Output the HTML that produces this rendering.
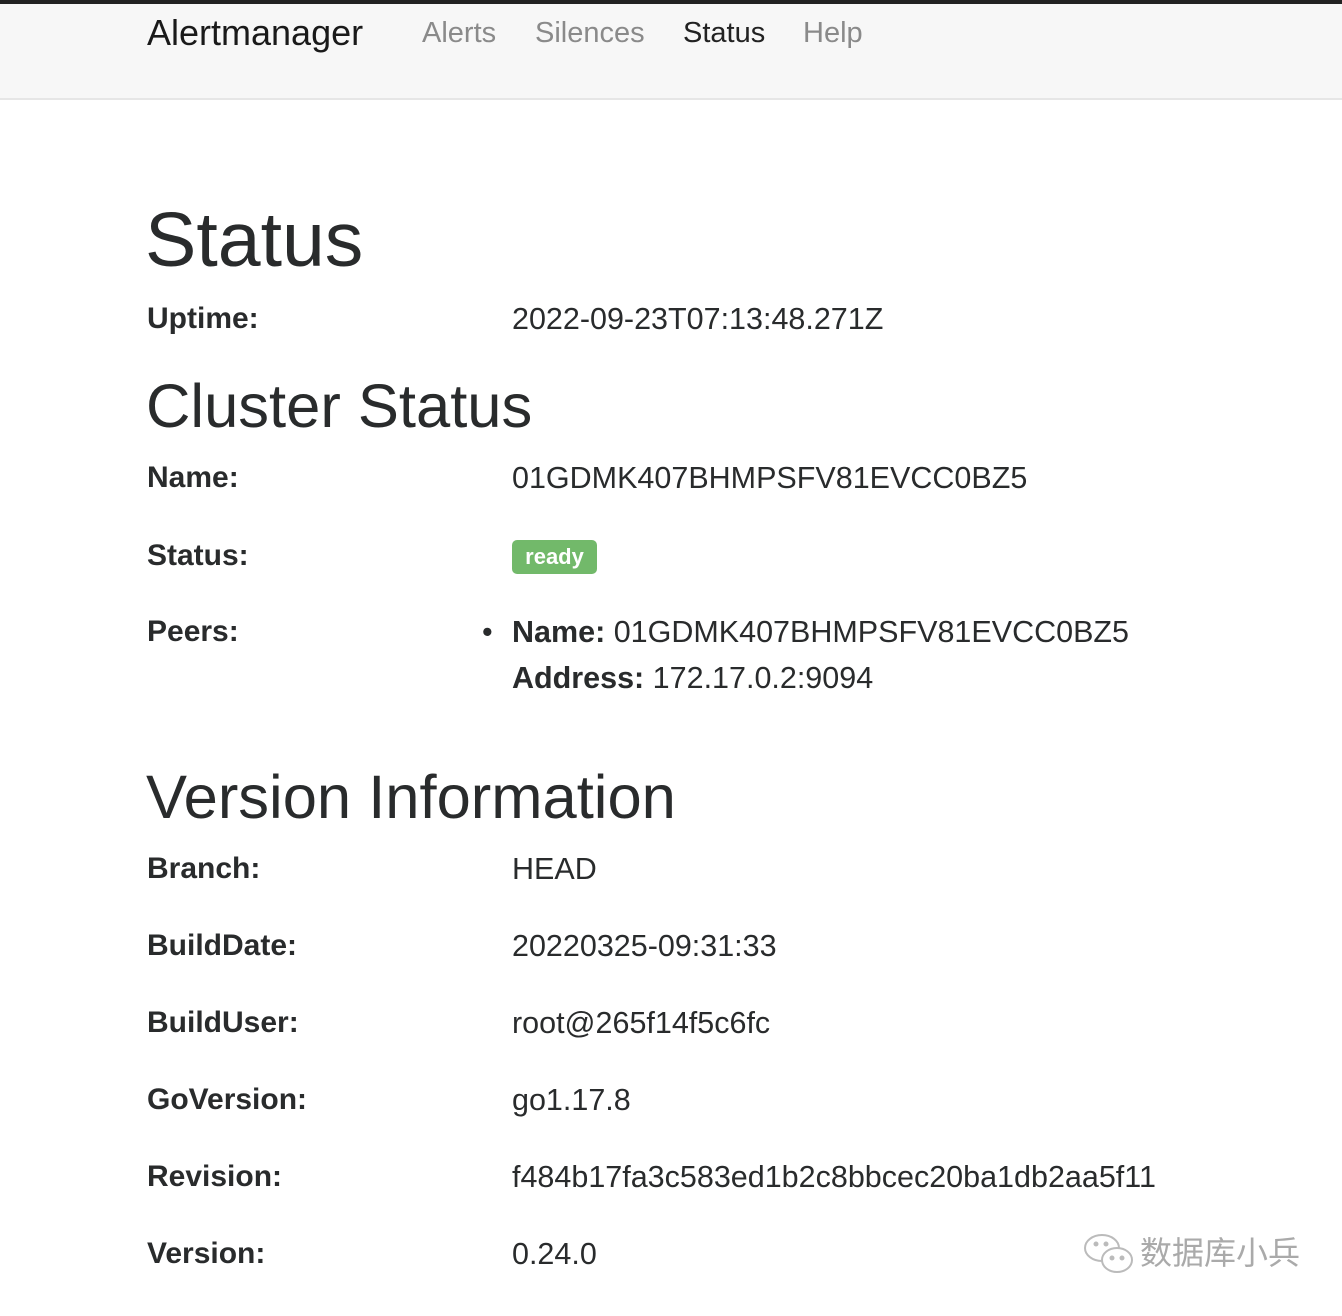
<!DOCTYPE html>
<html><head><meta charset="utf-8"><style>
*{margin:0;padding:0;box-sizing:border-box}
body{width:1342px;height:1316px;background:#fff;position:relative;overflow:hidden;font-family:"Liberation Sans",sans-serif;color:#292b2c}
.top{position:absolute;left:0;top:0;width:1342px;height:4px;background:#222}
.nav{position:absolute;left:0;top:4px;width:1342px;height:96px;background:#f7f7f7;border-bottom:2px solid #e6e6e6}
.a{position:absolute;white-space:nowrap}
.brand{font-size:36px;left:147px;top:7px;line-height:44px;color:#1a1a1a}
.nl{font-size:29px;top:11px;line-height:36px;color:#8a8a8a}
.h1{font-size:77px;left:145px;top:196px;line-height:88px}
.h2{font-size:61.5px;line-height:70px;left:146px}
.l{font-weight:bold;font-size:30px;line-height:36px;left:147px}
.v{font-size:30.5px;line-height:36px;left:512px}
.badge{position:absolute;left:512px;top:540px;width:85px;height:34px;background:#72b96a;border-radius:5px;color:#fff;font-weight:bold;font-size:22px;line-height:34px;text-align:center}
.wm{position:absolute;left:1140px;top:1233px;font-family:"Liberation Sans","Noto Sans CJK SC",sans-serif;font-size:32px;color:#aaa;line-height:40px}
</style></head><body>
<div class="top"></div>
<div class="nav">
<div class="a brand">Alertmanager</div>
<div class="a nl" style="left:422px">Alerts</div>
<div class="a nl" style="left:535px">Silences</div>
<div class="a nl" style="left:683px;color:#222">Status</div>
<div class="a nl" style="left:803px">Help</div>
</div>
<div class="a h1">Status</div>
<div class="a l" style="top:301px">Uptime:</div>
<div class="a v" style="top:301px">2022-09-23T07:13:48.271Z</div>
<div class="a h2" style="top:372px">Cluster Status</div>
<div class="a l" style="top:460px">Name:</div>
<div class="a v" style="top:460px">01GDMK407BHMPSFV81EVCC0BZ5</div>
<div class="a l" style="top:538px">Status:</div>
<div class="badge">ready</div>
<div class="a l" style="top:614px">Peers:</div>
<div class="a v" style="top:614px;left:482px">•</div>
<div class="a v" style="top:614px"><b>Name:</b> 01GDMK407BHMPSFV81EVCC0BZ5</div>
<div class="a v" style="top:660px"><b>Address:</b> 172.17.0.2:9094</div>
<div class="a h2" style="top:763px">Version Information</div>
<div class="a l" style="top:851px">Branch:</div>
<div class="a v" style="top:851px">HEAD</div>
<div class="a l" style="top:928px">BuildDate:</div>
<div class="a v" style="top:928px">20220325-09:31:33</div>
<div class="a l" style="top:1005px">BuildUser:</div>
<div class="a v" style="top:1005px">root@265f14f5c6fc</div>
<div class="a l" style="top:1082px">GoVersion:</div>
<div class="a v" style="top:1082px">go1.17.8</div>
<div class="a l" style="top:1159px">Revision:</div>
<div class="a v" style="top:1159px">f484b17fa3c583ed1b2c8bbcec20ba1db2aa5f11</div>
<div class="a l" style="top:1236px">Version:</div>
<div class="a v" style="top:1236px">0.24.0</div>
<svg style="position:absolute;left:1082px;top:1232px" width="56" height="46" viewBox="0 0 56 46" fill="none" stroke="#bbb" stroke-width="2">
<ellipse cx="20" cy="16" rx="17" ry="13"/><ellipse cx="35" cy="28" rx="15" ry="12" fill="#fff"/>
<circle cx="14" cy="12" r="1.5" fill="#bbb"/><circle cx="24" cy="12" r="1.5" fill="#bbb"/>
<circle cx="30" cy="26" r="1.5" fill="#bbb"/><circle cx="40" cy="26" r="1.5" fill="#bbb"/>
</svg>
<div class="wm">数据库小兵</div>
</body></html>
